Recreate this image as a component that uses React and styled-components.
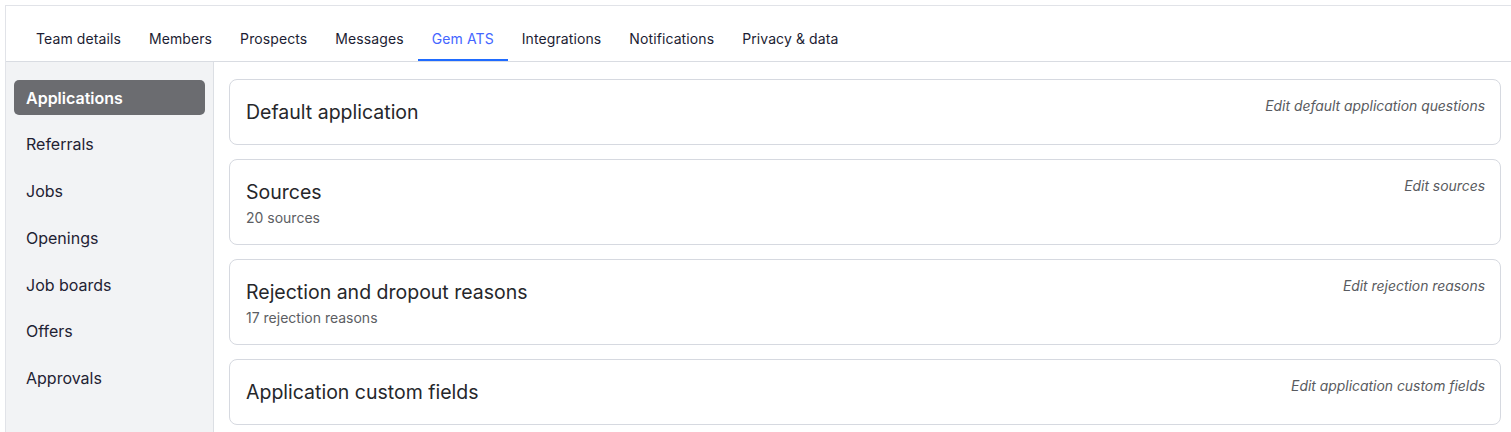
import React from 'react'
import styled, { createGlobalStyle } from 'styled-components'

const GlobalStyle = createGlobalStyle`
  html, body {
    margin: 0;
    height: 100%;
    background: #fff;
  }
  body {
    font-family: Inter, "Noto Sans", sans-serif;
    color: #1f2233;
  }
  #root {
    height: 100%;
  }
`

const Frame = styled.div`
  box-sizing: border-box;
  margin: 5px 0 0 5px;
  height: calc(100% - 5px);
  border-top: 1px solid #e1e3e8;
  border-left: 1px solid #e1e3e8;
  display: flex;
  flex-direction: column;
`

const TabBar = styled.nav`
  display: flex;
  align-items: flex-end;
  padding: 19px 0 0 16px;
  border-bottom: 1px solid #d9dce2;
`

const Tab = styled.div`
  padding: 4px 14px 10px;
  font-size: 14px;
  line-height: 20px;
  letter-spacing: 0.1px;
  color: ${p => (p.$active ? '#4466ff' : '#1c1d33')};
  border-bottom: 2px solid ${p => (p.$active ? '#1f6bff' : 'transparent')};
  cursor: pointer;
  white-space: nowrap;
`

const Body = styled.div`
  flex: 1;
  display: flex;
  min-height: 0;
`

const Sidebar = styled.aside`
  width: 208px;
  flex-shrink: 0;
  box-sizing: border-box;
  background: #f2f3f5;
  border-right: 1px solid #dcdfe4;
  padding: 18px 8px 0;
  display: flex;
  flex-direction: column;
  gap: 11.8px;
`

const NavItem = styled.div`
  height: 35px;
  display: flex;
  align-items: center;
  padding: 0 12px;
  border-radius: 5px;
  font-size: 16px;
  font-weight: ${p => (p.$active ? 600 : 400)};
  color: ${p => (p.$active ? '#fff' : '#1f2233')};
  background: ${p => (p.$active ? '#6b6c70' : 'transparent')};
  cursor: pointer;
`

const Content = styled.main`
  flex: 1;
  padding: 17px 10px 0 15px;
  display: flex;
  flex-direction: column;
  gap: 14px;
  overflow: hidden;
`

const Card = styled.section`
  border: 1px solid #d6d9e0;
  border-radius: 8px;
  padding: 16px 15px 16px 16px;
  display: flex;
  justify-content: space-between;
  align-items: flex-start;
  background: #fff;
`

const CardText = styled.div`
  display: flex;
  flex-direction: column;
`

const Title = styled.h3`
  margin: 0;
  font-size: 19.5px;
  line-height: 32px;
  font-weight: 400;
  color: #26272b;
`

const Meta = styled.div`
  font-size: 14px;
  line-height: 20px;
  color: #5c5e63;
`

const EditLink = styled.a`
  font-size: 13.9px;
  line-height: 20px;
  font-style: italic;
  color: #595b60;
  cursor: pointer;
  white-space: nowrap;
`

const tabs = ['Team details', 'Members', 'Prospects', 'Messages', 'Gem ATS', 'Integrations', 'Notifications', 'Privacy & data']
const navItems = ['Applications', 'Referrals', 'Jobs', 'Openings', 'Job boards', 'Offers', 'Approvals']
const cards = [
  { title: 'Default application', link: 'Edit default application questions' },
  { title: 'Sources', meta: '20 sources', link: 'Edit sources' },
  { title: 'Rejection and dropout reasons', meta: '17 rejection reasons', link: 'Edit rejection reasons' },
  { title: 'Application custom fields', link: 'Edit application custom fields' },
]

export default function App() {
  return (
    <>
      <GlobalStyle />
      <Frame>
        <TabBar>
          {tabs.map(t => (
            <Tab key={t} $active={t === 'Gem ATS'}>{t}</Tab>
          ))}
        </TabBar>
        <Body>
          <Sidebar>
            {navItems.map(n => (
              <NavItem key={n} $active={n === 'Applications'}>{n}</NavItem>
            ))}
          </Sidebar>
          <Content>
            {cards.map(c => (
              <Card key={c.title}>
                <CardText>
                  <Title>{c.title}</Title>
                  {c.meta && <Meta>{c.meta}</Meta>}
                </CardText>
                <EditLink>{c.link}</EditLink>
              </Card>
            ))}
          </Content>
        </Body>
      </Frame>
    </>
  )
}
